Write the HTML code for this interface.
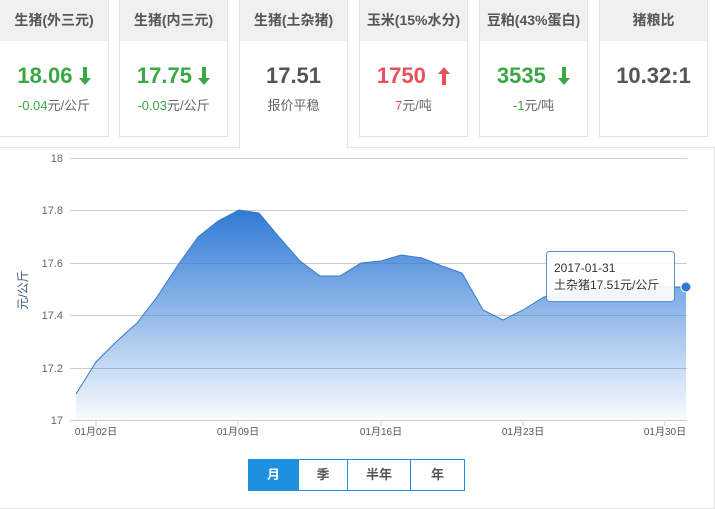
<!DOCTYPE html>
<html><head><meta charset="utf-8"><style>
body{margin:0;width:715px;height:492px;overflow:hidden;background:#fff;font-family:"Liberation Sans","Noto Sans CJK SC",sans-serif;position:relative}
.card{position:absolute;top:-1px;width:107px;height:136px;border:1px solid #e3e3e3;background:#fff;text-align:center}
.card .h{height:41px;background:#f0f0f0;color:#555;font-size:14px;font-weight:bold;line-height:41px}
.card .v{font-size:22px;font-weight:bold;margin-top:20px;line-height:30px}
.card .s{font-size:13px;color:#666;margin-top:4px}
.g{color:#3aa844}.r{color:#e8505b}.d{color:#555}
.panel{position:absolute;left:-1px;top:147px;width:714px;height:360px;border:1px solid #e3e3e3}
.btns{position:absolute;left:248px;top:459px;height:30px;border:1px solid #1e90e0;display:flex}
.btns div{height:30px;line-height:30px;text-align:center;font-size:13px;font-weight:bold;color:#555;border-left:1px solid #1e90e0}
.ar{display:inline-block;vertical-align:-2px}
</style></head><body>
<div class="panel"></div>
<div class="card" style="left:-1px;width:108px"><div class="h">生猪(外三元)</div><div class="v g">18.06 <svg class="ar" width="12" height="18" viewBox="0 0 12 18"><path d="M4,0H8V11H12L6,18L0,11H4Z" fill="#3aa844"/></svg></div><div class="s"><span class="g">-0.04</span>元/公斤</div></div>
<div class="card" style="left:119px"><div class="h">生猪(内三元)</div><div class="v g">17.75 <svg class="ar" width="12" height="18" viewBox="0 0 12 18"><path d="M4,0H8V11H12L6,18L0,11H4Z" fill="#3aa844"/></svg></div><div class="s"><span class="g">-0.03</span>元/公斤</div></div>
<div class="card" style="left:239px;height:149px;border-bottom:none"><div class="h">生猪(土杂猪)</div><div class="v d">17.51</div><div class="s">报价平稳</div></div>
<div class="card" style="left:359px"><div class="h">玉米(15%水分)</div><div class="v r">1750 &nbsp;<svg class="ar" width="12" height="18" viewBox="0 0 12 18"><path d="M4,18H8V7H12L6,0L0,7H4Z" fill="#e8505b"/></svg></div><div class="s"><span class="r">7</span>元/吨</div></div>
<div class="card" style="left:479px"><div class="h">豆粕(43%蛋白)</div><div class="v g">3535 &nbsp;<svg class="ar" width="12" height="18" viewBox="0 0 12 18"><path d="M4,0H8V11H12L6,18L0,11H4Z" fill="#3aa844"/></svg></div><div class="s">-<span class="g">1</span>元/吨</div></div>
<div class="card" style="left:599px"><div class="h">猪粮比</div><div class="v d">10.32:1</div></div>
<svg style="position:absolute;left:0;top:0" width="715" height="492">
<defs><linearGradient id="gr" x1="0" y1="0" x2="0" y2="1"><stop offset="0" stop-color="#2f7ad6"/><stop offset="1" stop-color="#2f7ad6" stop-opacity="0.03"/></linearGradient></defs>
<g stroke="#ccc" stroke-width="1">
<line x1="70" y1="158.5" x2="687" y2="158.5"/><line x1="70" y1="210.5" x2="687" y2="210.5"/><line x1="70" y1="263.5" x2="687" y2="263.5"/><line x1="70" y1="315.5" x2="687" y2="315.5"/><line x1="70" y1="368.5" x2="687" y2="368.5"/><line x1="70" y1="420.5" x2="687" y2="420.5"/>
<line x1="96" y1="420" x2="96" y2="426"/><line x1="238" y1="420" x2="238" y2="426"/><line x1="381" y1="420" x2="381" y2="426"/><line x1="523" y1="420" x2="523" y2="426"/><line x1="665" y1="420" x2="665" y2="426"/></g>
<path d="M76,394 L96,362 L117,341 L137,323 L157,297 L178,265 L198,237 L218,221 L239,210 L259,213 L279,237 L300,261 L320,276 L340,276 L361,263 L381,261 L401,255 L422,258 L442,266 L462,273 L483,310 L503,320 L523,310 L544,297 L564,292 L584,289 L605,289 L625,287 L645,287 L666,287 L686,287 L686,420 L76,420 Z" fill="url(#gr)" stroke="none"/>
<path d="M76,394 L96,362 L117,341 L137,323 L157,297 L178,265 L198,237 L218,221 L239,210 L259,213 L279,237 L300,261 L320,276 L340,276 L361,263 L381,261 L401,255 L422,258 L442,266 L462,273 L483,310 L503,320 L523,310 L544,297 L564,292 L584,289 L605,289 L625,287 L645,287 L666,287 L686,287" fill="none" stroke="#3a78c8" stroke-width="1"/>
<g font-size="11" fill="#666" text-anchor="end" font-family="Liberation Sans,sans-serif">
<text x="63" y="162">18</text><text x="63" y="214">17.8</text><text x="63" y="267">17.6</text><text x="63" y="319">17.4</text><text x="63" y="372">17.2</text><text x="63" y="424">17</text></g>
<g font-size="10" fill="#555" text-anchor="middle" font-family="Liberation Sans,Noto Sans CJK SC,sans-serif">
<text x="96" y="435">01月02日</text><text x="238" y="435">01月09日</text><text x="381" y="435">01月16日</text><text x="523" y="435">01月23日</text><text x="665" y="435">01月30日</text></g>
<text transform="translate(27,290) rotate(-90)" font-size="12" fill="#3a5a80" text-anchor="middle" font-family="Liberation Sans,Noto Sans CJK SC,sans-serif">元/公斤</text>
<rect x="546.5" y="251.5" width="128" height="50" rx="3" fill="#fff" fill-opacity="0.9" stroke="#5b8fd0"/>
<text x="554" y="272" font-size="12" fill="#333" font-family="Liberation Sans,Noto Sans CJK SC,sans-serif">2017-01-31</text>
<text x="554" y="289" font-size="12" fill="#333" font-family="Liberation Sans,Noto Sans CJK SC,sans-serif">土杂猪17.51元/公斤</text>
<circle cx="686" cy="287" r="5" fill="#2f7ad6" stroke="#fff" stroke-width="1"/>
</svg>
<div class="btns"><div style="width:49px;background:#1e90e0;color:#fff;border-left:none">月</div><div style="width:48px">季</div><div style="width:62px">半年</div><div style="width:53px">年</div></div>
</body></html>
